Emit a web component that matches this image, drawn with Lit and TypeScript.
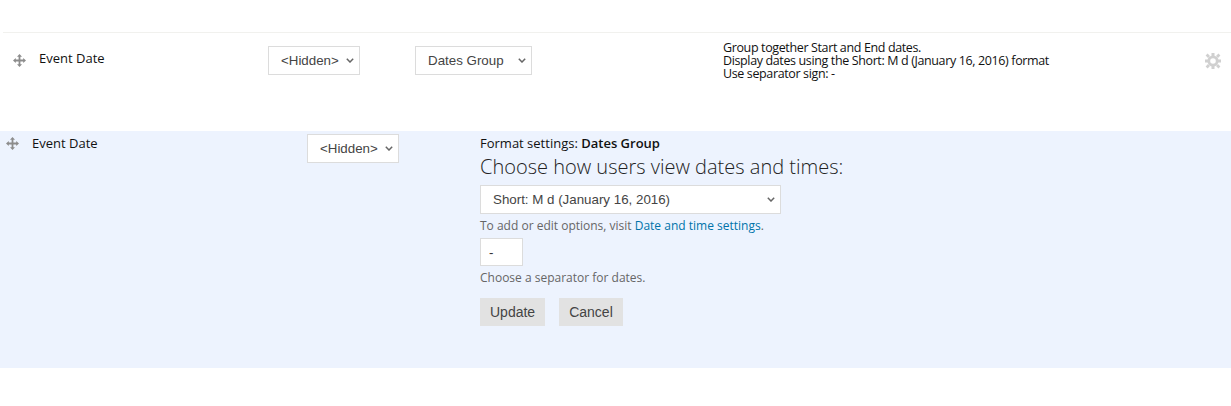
import { LitElement, html, css, svg } from "lit";
import { customElement } from "lit/decorators.js";

const move = svg`<path fill="#8c8c8c" d="M6.5 0 9 2.8H7.4V5.6H10.2V4L13 6.5 10.2 9V7.4H7.4V10.2H9L6.5 13 4 10.2H5.6V7.4H2.8V9L0 6.5 2.8 4V5.6H5.6V2.8H4Z"/>`;
const gear = svg`<g fill="#d0d0d0"><path fill-rule="evenodd" d="M8 2.4a5.6 5.6 0 1 0 0 11.2A5.6 5.6 0 0 0 8 2.4zM8 5.2a2.8 2.8 0 1 1 0 5.6 2.8 2.8 0 0 1 0-5.6z"/><path d="M6.5 0h3v3h-3zM6.5 13h3v3h-3zM0 6.5h3v3H0zM13 6.5h3v3h-3z"/><path d="M2.6.6 5 3 3 5 .6 2.6zM13.4.6 15.4 2.6 13 5 11 3zM3 11l2 2-2.4 2.4-2-2zM13 11l2.4 2.4-2 2L11 13z"/></g>`;

@customElement("app-root")
export class AppRoot extends LitElement {
  static styles = css`
    :host {
      display: block;
      width: 1231px;
      height: 406px;
      background: #fff;
      font-family: "Open Sans", sans-serif;
      font-size: 13px;
      color: #111;
      overflow: hidden;
    }
    .row {
      margin: 32px 0 0 3px;
      height: 99px;
      border-top: 1px solid #f1f1ee;
      box-sizing: border-box;
      display: grid;
      grid-template-columns: 36px 229px 147px 308px 482px 26px;
      align-items: start;
    }
    .panel {
      height: 237px;
      background: #edf3fe;
      display: grid;
      grid-template-columns: 32px 275px 173px 1fr;
      align-items: start;
    }
    .icon { display: block; }
    .row .move { margin: 21px 0 0 10px; }
    .panel .move { margin: 6px 0 0 6px; }
    .label { line-height: 18px; }
    .row .label { margin-top: 16px; }
    .panel .label { margin-top: 3px; }
    select {
      appearance: none;
      -webkit-appearance: none;
      font-family: "Liberation Sans", Arial, sans-serif;
      font-size: 13.33px;
      color: #444;
      background-color: #fff;
      background-image: url("data:image/svg+xml,%3Csvg xmlns='http://www.w3.org/2000/svg' width='8' height='5' viewBox='0 0 8 5'%3E%3Cpath d='M.8.8 4 4l3.2-3.2' fill='none' stroke='%23666' stroke-width='1.5'/%3E%3C/svg%3E");
      background-repeat: no-repeat;
      background-position: right 5px center;
      border: 1px solid #dcdcdc;
      border-radius: 0;
      height: 29px;
      padding: 0 0 0 12px;
      box-sizing: border-box;
      display: block;
    }
    .row select { margin-top: 13px; }
    .panel > select { margin-top: 3px; }
    .hidden-sel { width: 92px; }
    .group-sel { width: 117px; }
    .desc {
      margin-top: 8px;
      font-size: 12.5px;
      letter-spacing: -0.37px;
      line-height: 13px;
    }
    .gear { margin-top: 20px; }
    .form { padding-top: 3px; display: flex; flex-direction: column; align-items: flex-start; }
    .fmt { line-height: 18px; }
    .fmt b { font-weight: 600; }
    h2 {
      margin: 2px 0 0;
      font-size: 20px;
      font-weight: 300;
      line-height: 26px;
      color: #222;
    }
    .short { width: 301px; margin-top: 5px; }
    .hint { font-size: 12px; line-height: 16px; color: #666; }
    .short + .hint { margin-top: 4px; }
    a { color: #0073aa; text-decoration: none; }
    input {
      width: 43px;
      height: 28px;
      margin-top: 4px;
      box-sizing: border-box;
      border: 1px solid #dcdcdc;
      background: #fff;
      padding: 0 8px;
      font-family: "Liberation Sans", Arial, sans-serif;
      font-size: 13.33px;
      color: #333;
      border-radius: 0;
      outline: none;
    }
    input + .hint { margin-top: 4px; }
    .btns { display: flex; gap: 14px; margin-top: 12px; }
    button {
      height: 28px;
      border: 0;
      border-radius: 0;
      background: #e2e2e2;
      color: #444;
      font-family: "Liberation Sans", Arial, sans-serif;
      font-size: 14px;
      padding: 0 10px;
    }
  `;

  render() {
    return html`
      <div class="row">
        <svg class="icon move" width="13" height="13" viewBox="0 0 13 13">${move}</svg>
        <div class="label">Event Date</div>
        <select class="hidden-sel"><option>&lt;Hidden&gt;</option></select>
        <select class="group-sel"><option>Dates Group</option></select>
        <div class="desc">Group together Start and End dates.<br />Display dates using the Short: M d (January 16, 2016) format<br />Use separator sign: -</div>
        <svg class="icon gear" width="16" height="16" viewBox="0 0 16 16">${gear}</svg>
      </div>
      <div class="panel">
        <svg class="icon move" width="13" height="13" viewBox="0 0 13 13">${move}</svg>
        <div class="label">Event Date</div>
        <select class="hidden-sel"><option>&lt;Hidden&gt;</option></select>
        <div class="form">
          <div class="fmt">Format settings: <b>Dates Group</b></div>
          <h2>Choose how users view dates and times:</h2>
          <select class="short"><option>Short: M d (January 16, 2016)</option></select>
          <div class="hint">To add or edit options, visit <a href="#">Date and time settings</a>.</div>
          <input value="-" />
          <div class="hint">Choose a separator for dates.</div>
          <div class="btns"><button>Update</button><button>Cancel</button></div>
        </div>
      </div>
    `;
  }
}
